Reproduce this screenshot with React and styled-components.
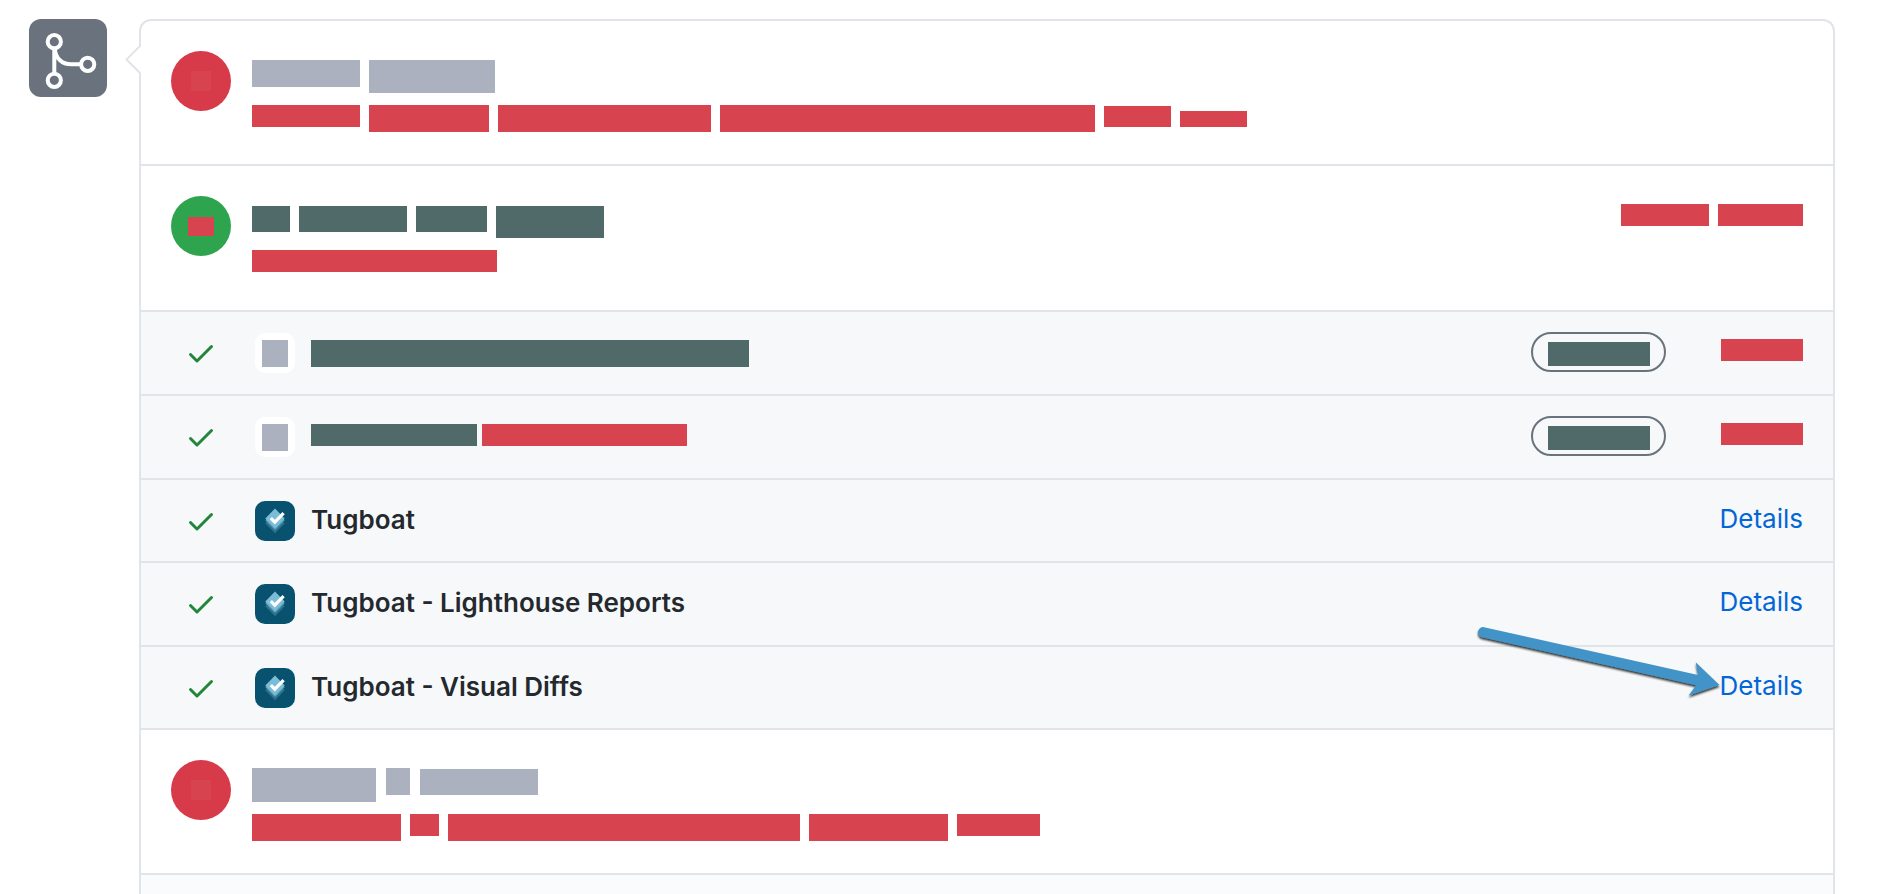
import React from "react";
import styled, { createGlobalStyle } from "styled-components";

const colors = {
  border: "#e1e4e8",
  subtle: "#f6f8fa",
  grey: "#abb1bf",
  red: "#d84350",
  teal: "#506a6a",
};

const GlobalStyle = createGlobalStyle`
  *, *::before, *::after { box-sizing: border-box; }
  body {
    margin: 0;
    background: #fff;
    color: #24292e;
    font-family: Inter, "Liberation Sans", sans-serif;
    font-size: 26px;
    line-height: 24px;
    overflow: hidden;
  }
`;

const Page = styled.main`
  display: flex;
  align-items: flex-start;
  gap: 32px;
  min-height: 100vh;
  padding: 19px 45px 0 29px;
`;

const MergeBadge = styled.div`
  flex: none;
  width: 78px;
  height: 78px;
  border-radius: 12px;
  background: #6a737d;

  svg { display: block; }
`;

const Card = styled.section`
  position: relative;
  flex: 1;
  min-width: 0;
  display: flex;
  flex-direction: column;
  min-height: calc(100vh - 19px);
  border: 2px solid ${colors.border};
  border-bottom: 0;
  border-radius: 12px 12px 0 0;
`;

const Notch = styled.svg`
  position: absolute;
  top: 22px;
  left: -16px;
`;

const Summary = styled.div`
  display: flex;
  gap: 21px;
  min-height: ${(p) => p.$height}px;
  padding: 30px 30px 0;
  border-bottom: 2px solid ${colors.border};
`;

const StatusDot = styled.div`
  flex: none;
  display: flex;
  align-items: center;
  justify-content: center;
  width: 60px;
  height: 60px;
  border-radius: 50%;
  background: ${(p) => p.$color};
`;

const SummaryText = styled.div`
  flex: 1;
  display: flex;
  flex-direction: column;
  gap: 12px;
`;

const TitleArea = styled.div`
  display: flex;
  align-items: flex-end;
  height: 42px;
`;

const BarLine = styled.div`
  display: flex;
  align-items: flex-start;
  gap: ${(p) => p.$gap || 9}px;
`;

const Bar = styled.div`
  flex: none;
  width: ${(p) => p.$w}px;
  height: ${(p) => p.$h || 22}px;
  margin-top: ${(p) => p.$drop || 0}px;
  background: ${(p) => colors[p.$tone || "red"]};
`;

const SummaryActions = styled.div`
  display: flex;
  align-items: flex-start;
  gap: 9px;
  padding-top: 8px;
`;

const CheckList = styled.ul`
  margin: 0;
  padding: 0;
  list-style: none;
  background: ${colors.subtle};
`;

const CheckRow = styled.li`
  display: flex;
  align-items: center;
  height: 84px;
  padding: 0 30px;
  border-bottom: 2px solid ${colors.border};

  &:nth-child(odd):not(:first-child) { height: 83px; }
`;

const CheckState = styled.div`
  display: flex;
  justify-content: center;
  width: 60px;
  margin-right: 24px;
`;

const AppAvatar = styled.div`
  display: flex;
  align-items: center;
  justify-content: center;
  width: 40px;
  height: 40px;
  margin-right: 16px;
  border-radius: 10px;
  overflow: hidden;
  background: ${(p) => p.$color || "#fff"};
`;

const CheckName = styled.div`
  flex: 1;
  display: flex;
  align-items: flex-start;
  gap: 5px;
  height: 26px;
  font-weight: 600;
`;

const Pill = styled.div`
  display: flex;
  align-items: flex-end;
  justify-content: center;
  width: 135px;
  height: 40px;
  margin: 0 55px 2px 0;
  padding-bottom: 4px;
  border: 2px solid #6a737d;
  border-radius: 20px;
`;

const CheckAction = styled.div`
  position: relative;
  height: 28px;
`;

const DetailsLink = styled.a`
  display: block;
  color: #0366d6;
  text-decoration: none;
`;

const Arrow = styled.svg`
  position: absolute;
  right: 100%;
  bottom: 0;
  overflow: visible;
  pointer-events: none;
`;

const CardFooter = styled.div`
  flex: 1;
  background: #fafbfc;
`;

function MergeIcon() {
  return (
    <svg width="78" height="78" viewBox="0 0 78 78" fill="none" stroke="#fff" strokeWidth="4">
      <circle cx="25.3" cy="22.7" r="6.6" />
      <circle cx="25.3" cy="61.3" r="6.6" />
      <circle cx="58.7" cy="45.3" r="6.6" />
      <path d="M25.3 29.5V54.5M25.8 29.5C26.3 39 33 45.3 42 45.3H52" />
    </svg>
  );
}

function CheckIcon() {
  return (
    <svg width="32" height="32" viewBox="0 0 16 16" fill="#22863a" aria-label="Passed">
      <path
        fillRule="evenodd"
        d="M13.78 4.22a.75.75 0 010 1.06l-7.25 7.25a.75.75 0 01-1.06 0L2.22 9.28a.75.75 0 011.06-1.06L6 10.94l6.72-6.72a.75.75 0 011.06 0z"
      />
    </svg>
  );
}

function TugboatIcon() {
  return (
    <svg width="40" height="40" viewBox="0 0 40 40">
      <path d="M20 12.500l9.700 9.800L20 32.300l-9.700-10z" fill="#2e728d" />
      <path d="M20 9.500l9.700 9.800L20 29l-9.700-9.700z" fill="#5d9fba" />
      <path d="M20 7.600l9.700 9.900L20 27.600l-9.700-10.100z" fill="#7bbcd8" />
      <path d="M15.800 17.200l4 4 8.800-9" fill="none" stroke="#fff" strokeWidth="3.200" />
    </svg>
  );
}

function PointerArrow() {
  return (
    <Arrow width="240" height="74" viewBox="1480 628 240 74" aria-hidden="true">
      <defs>
        <filter id="arrow-shadow" x="-10%" y="-20%" width="120%" height="150%">
          <feDropShadow dx="0" dy="2" stdDeviation="1" floodColor="#000" floodOpacity="0.8" />
        </filter>
      </defs>
      <path
        filter="url(#arrow-shadow)"
        fill="#4294c8"
        d="M1484 627.2L1698 675L1695.700 662.300L1719.500 685L1688.700 695.500L1696 685.200L1482 637.200A5.100 5.100 0 0 1 1484 627.200Z"
      />
    </Arrow>
  );
}

const redactedChecks = [
  { id: "first", bars: [{ w: 438, h: 27, tone: "teal" }] },
  { id: "second", bars: [{ w: 166, tone: "teal" }, { w: 205 }] },
];

const tugboatChecks = [
  { name: "Tugboat" },
  { name: "Tugboat - Lighthouse Reports" },
  { name: "Tugboat - Visual Diffs", highlighted: true },
];

function Bars({ items, tone, gap }) {
  return (
    <BarLine $gap={gap}>
      {items.map(([w, h, drop], i) => (
        <Bar key={i} $w={w} $h={h} $drop={drop} $tone={tone} />
      ))}
    </BarLine>
  );
}

export default function App() {
  return (
    <>
      <GlobalStyle />
      <Page>
        <MergeBadge>
          <MergeIcon />
        </MergeBadge>
        <Card>
          <Notch width="17" height="34" viewBox="0 0 17 34" fill="none">
            <path d="M17 2L2 16.500l15 14.500z" fill="#fff" />
            <path d="M15.500 2.500L1.500 16.500l14 14" stroke={colors.border} strokeWidth="2" />
          </Notch>

          <Summary $height={145}>
            <StatusDot $color="#d73a49">
              <Bar $w={20} $h={20} />
            </StatusDot>
            <SummaryText>
              <TitleArea>
                <Bars tone="grey" items={[[108, 27], [126, 33]]} />
              </TitleArea>
              <Bars items={[[108, 22], [120, 27], [213, 27], [375, 27], [67, 21, 1], [67, 16, 6]]} />
            </SummaryText>
          </Summary>

          <Summary $height={146}>
            <StatusDot $color="#2ea44f">
              <Bar $w={26} $h={19} />
            </StatusDot>
            <SummaryText>
              <TitleArea>
                <Bars tone="teal" items={[[38, 26], [108, 26], [71, 26], [108, 32]]} />
              </TitleArea>
              <Bars items={[[245, 22]]} />
            </SummaryText>
            <SummaryActions>
              <Bar $w={88} />
              <Bar $w={85} />
            </SummaryActions>
          </Summary>

          <CheckList>
            {redactedChecks.map((check) => (
              <CheckRow key={check.id}>
                <CheckState>
                  <CheckIcon />
                </CheckState>
                <AppAvatar>
                  <Bar $w={26} $h={27} $tone="grey" />
                </AppAvatar>
                <CheckName>
                  {check.bars.map((bar, i) => (
                    <Bar key={i} $w={bar.w} $h={bar.h} $tone={bar.tone} />
                  ))}
                </CheckName>
                <Pill>
                  <Bar $w={102} $h={24} $tone="teal" />
                </Pill>
                <CheckAction>
                  <Bar $w={82} />
                </CheckAction>
              </CheckRow>
            ))}
            {tugboatChecks.map((check) => (
              <CheckRow key={check.name}>
                <CheckState>
                  <CheckIcon />
                </CheckState>
                <AppAvatar $color="#08526f">
                  <TugboatIcon />
                </AppAvatar>
                <CheckName>{check.name}</CheckName>
                <CheckAction>
                  <DetailsLink href="#details">Details</DetailsLink>
                  {check.highlighted && <PointerArrow />}
                </CheckAction>
              </CheckRow>
            ))}
          </CheckList>

          <Summary $height={145}>
            <StatusDot $color="#d73a49">
              <Bar $w={20} $h={20} />
            </StatusDot>
            <SummaryText>
              <TitleArea>
                <Bars tone="grey" gap={10} items={[[124, 34], [24, 27], [118, 26, 1]]} />
              </TitleArea>
              <Bars items={[[149, 27], [29, 22], [352, 27], [139, 27], [83, 22]]} />
            </SummaryText>
          </Summary>

          <CardFooter />
        </Card>
      </Page>
    </>
  );
}
